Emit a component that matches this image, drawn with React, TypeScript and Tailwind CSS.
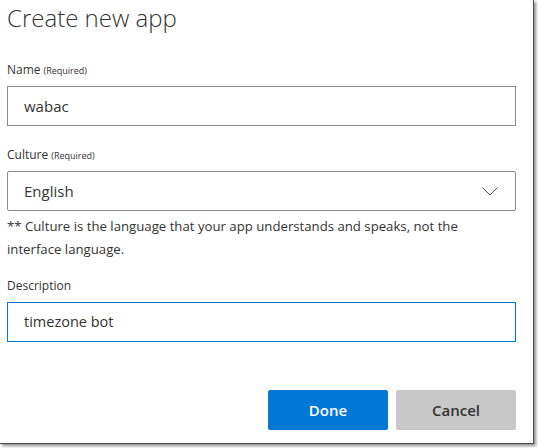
import React from 'react';

const font = { fontFamily: '"Segoe UI", "Open Sans", "Noto Sans", sans-serif' };

const Label = ({ text, required }: { text: string; required?: boolean }) => (
  <div className="h-[20px] flex items-end text-[12px] text-[#333] leading-none">
    <span>{text}</span>
    {required && <span className="ml-[3px] text-[9px] pb-[1px]">(Required)</span>}
  </div>
);

const App = () => {
  return (
    <div className="w-[538px] h-[448px] bg-white" style={font}>
      <div className="w-[534px] h-[444px] bg-white border-r border-b border-[#4a4a4a] shadow-[2px_2px_3px_rgba(0,0,0,0.45)] flex flex-col pl-[7px] pr-[17px]">
        <h1 className="mt-[1px] text-[24px] font-light text-[#333] leading-[34px]">Create new app</h1>

        <div className="mt-[21px]">
          <Label text="Name" required />
          <div className="mt-[10px] h-[40px] border border-[#8a8a8a] flex items-center pl-[16px] text-[15px] text-[#333]">
            wabac
          </div>
        </div>

        <div className="mt-[15px]">
          <Label text="Culture" required />
          <div className="mt-[10px] h-[40px] border border-[#8a8a8a] rounded-[2px] flex items-center justify-between pl-[16px] pr-[17px] text-[15px] text-[#333]">
            <span>English</span>
            <svg width="16" height="9" viewBox="0 0 16 9" fill="none">
              <path d="M0.5 0.5 L8 8 L15.5 0.5" stroke="#555" strokeWidth="1" />
            </svg>
          </div>
          <p className="mt-[4px] w-[462px] text-[13.2px] leading-[23px] text-[#333]">
            ** Culture is the language that your app understands and speaks, not the interface language.
          </p>
        </div>

        <div className="mt-[11px]">
          <Label text="Description" />
          <div className="mt-[10px] h-[40px] border border-[#0078d4] flex items-center pl-[16px] text-[14.5px] text-[#333]">
            timezone bot
          </div>
        </div>

        <div className="mt-[48px] flex justify-end gap-[8px]">
          <button className="w-[120px] h-[40px] rounded-[2px] bg-[#0078d4] text-white text-[15px] font-semibold">
            Done
          </button>
          <button className="w-[120px] h-[40px] rounded-[2px] bg-[#c8c8c8] text-[#333] text-[15px] font-semibold">
            Cancel
          </button>
        </div>
      </div>
    </div>
  );
};

export default App;
